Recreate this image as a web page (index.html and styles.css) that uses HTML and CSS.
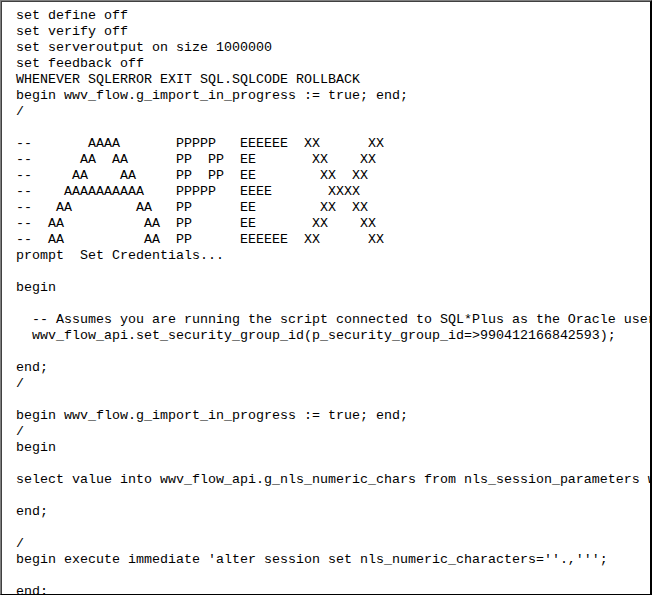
FILE: index.html
```html
<!DOCTYPE html>
<html>
<head>
<meta charset="utf-8">
<link rel="stylesheet" href="styles.css">
</head>
<body>
<div class="frame">
<div class="editor">
<pre class="code">set define off
set verify off
set serveroutput on size 1000000
set feedback off
WHENEVER SQLERROR EXIT SQL.SQLCODE ROLLBACK
begin wwv_flow.g_import_in_progress := true; end;
/

--       AAAA       PPPPP   EEEEEE  XX      XX
--      AA  AA      PP  PP  EE       XX    XX
--     AA    AA     PP  PP  EE        XX  XX
--    AAAAAAAAAA    PPPPP   EEEE       XXXX
--   AA        AA   PP      EE        XX  XX
--  AA          AA  PP      EE       XX    XX
--  AA          AA  PP      EEEEEE  XX      XX
prompt  Set Credentials...

begin

  -- Assumes you are running the script connected to SQL*Plus as the Oracle user APEX_040000 or as the owner (parsing schema) of the application.
  wwv_flow_api.set_security_group_id(p_security_group_id=>990412166842593);

end;
/

begin wwv_flow.g_import_in_progress := true; end;
/
begin

select value into wwv_flow_api.g_nls_numeric_chars from nls_session_parameters where parameter='NLS_NUMERIC_CHARACTERS';

end;

/
begin execute immediate 'alter session set nls_numeric_characters=''.,''';

end;
/</pre>
</div>
</div>
</body>
</html>
```
FILE: styles.css
```css
html, body {
  margin: 0;
  padding: 0;
  background: #ffffff;
}
.frame {
  width: 652px;
  height: 595px;
  box-sizing: border-box;
  border-top: 1px solid #808080;
  border-left: 1px solid #808080;
  border-right: 1px solid #000000;
  border-bottom: 1px solid #000000;
  overflow: hidden;
}
.editor {
  height: 100%;
  box-sizing: border-box;
  border-top: 1px solid #404040;
  border-left: 1px solid #404040;
  border-right: 1px solid #000000;
  background: #ffffff;
  overflow: hidden;
}
.code {
  margin: 0;
  padding: 6px 0 0 14px;
  font-family: "Liberation Mono", "Courier New", monospace;
  font-size: 13.333px;
  line-height: 16px;
  color: #000000;
  white-space: pre;
}
```
